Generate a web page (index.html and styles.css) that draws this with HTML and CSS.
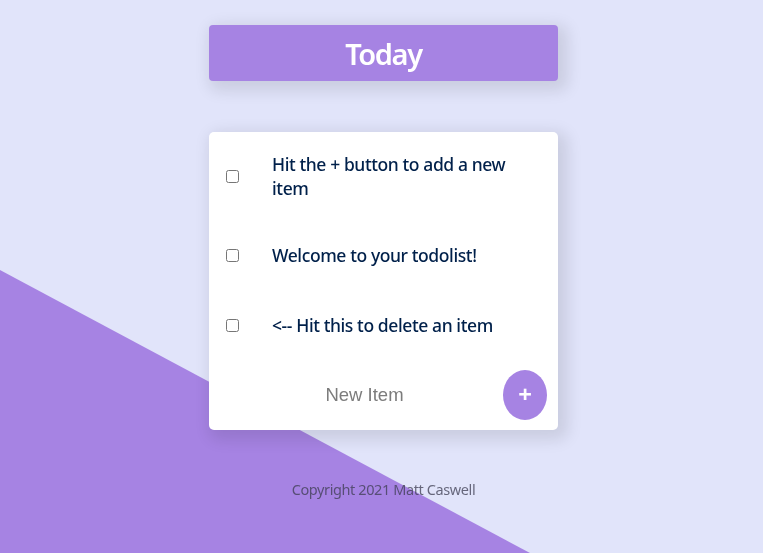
FILE: index.html
```html
<!DOCTYPE html>
<html lang="en">
<head>
<meta charset="utf-8">
<title>Today</title>
<link rel="stylesheet" href="styles.css">
</head>
<body>
<main class="page">
  <header class="heading">
    <h1 class="heading-title">Today</h1>
  </header>
  <section class="card">
    <div class="item">
      <input class="item-check" type="checkbox">
      <p class="item-text">Hit the + button to add a new item</p>
    </div>
    <div class="item">
      <input class="item-check" type="checkbox">
      <p class="item-text">Welcome to your todolist!</p>
    </div>
    <div class="item">
      <input class="item-check" type="checkbox">
      <p class="item-text">&lt;-- Hit this to delete an item</p>
    </div>
    <form class="item-form">
      <input class="new-input" type="text" placeholder="New Item" autocomplete="off">
      <button class="add-btn" type="button">+</button>
    </form>
  </section>
  <footer class="footer">
    <p class="footer-text">Copyright 2021 Matt Caswell</p>
  </footer>
</main>
</body>
</html>
```
FILE: styles.css
```css
html, body {
  margin: 0;
  padding: 0;
  height: 100%;
}

body {
  background-color: #E1E4FA;
  font-family: "Noto Sans", "Open Sans", sans-serif;
  position: relative;
  overflow: hidden;
}

body::before {
  content: "";
  position: fixed;
  inset: 0;
  background: #A683E3;
  clip-path: polygon(0 270px, 530px 553px, 0 553px);
  z-index: -1;
}

.page {
  display: flex;
  flex-direction: column;
  align-items: center;
  padding-left: 4px;
}

.heading {
  width: 349px;
  height: 56px;
  margin-top: 25px;
  background: #A683E3;
  border-radius: 4px;
  box-shadow: 5px 5px 15px 5px rgba(0, 0, 0, 0.1);
  display: flex;
  align-items: center;
  justify-content: center;
}

.heading-title {
  margin: 0;
  color: #fff;
  font-size: 29px;
  font-weight: 600;
  letter-spacing: -1.4px;
}

.card {
  width: 349px;
  margin-top: 51px;
  background: #fff;
  border-radius: 5px;
  box-shadow: 5px 5px 15px 5px rgba(0, 0, 0, 0.1);
}

.item {
  box-sizing: border-box;
  min-height: 70px;
  display: flex;
  align-items: center;
  padding: 20px 30px 20px 17px;
}

.item-check {
  width: 13px;
  height: 13px;
  margin: 0 33px 0 0;
  flex: none;
}

.item-text {
  margin: 0;
  font-size: 17.5px;
  font-weight: 500;
  line-height: 24px;
  color: #00204A;
  letter-spacing: -0.4px;
}

.item-form {
  display: flex;
  align-items: center;
  height: 70px;
  padding: 0 11px 0 17px;
}

.new-input {
  flex: 1;
  min-width: 0;
  border: none;
  outline: none;
  background: transparent;
  text-align: center;
  font-family: "Liberation Sans", Arial, sans-serif;
  font-size: 18.5px;
  color: #333;
  padding: 0;
  height: 30px;
}

.new-input::placeholder {
  color: #7c7c7c;
}

.add-btn {
  width: 44px;
  height: 50px;
  border: none;
  border-radius: 50%;
  background: #A683E3;
  color: #fff;
  font-family: "Noto Sans", sans-serif;
  font-size: 24px;
  font-weight: 700;
  line-height: 1;
  padding: 0 0 3px 0;
  flex: none;
}

.footer {
  margin-top: 49px;
}

.footer-text {
  margin: 0;
  font-size: 14.5px;
  color: rgba(60, 60, 80, 0.75);
  letter-spacing: -0.4px;
}
```
